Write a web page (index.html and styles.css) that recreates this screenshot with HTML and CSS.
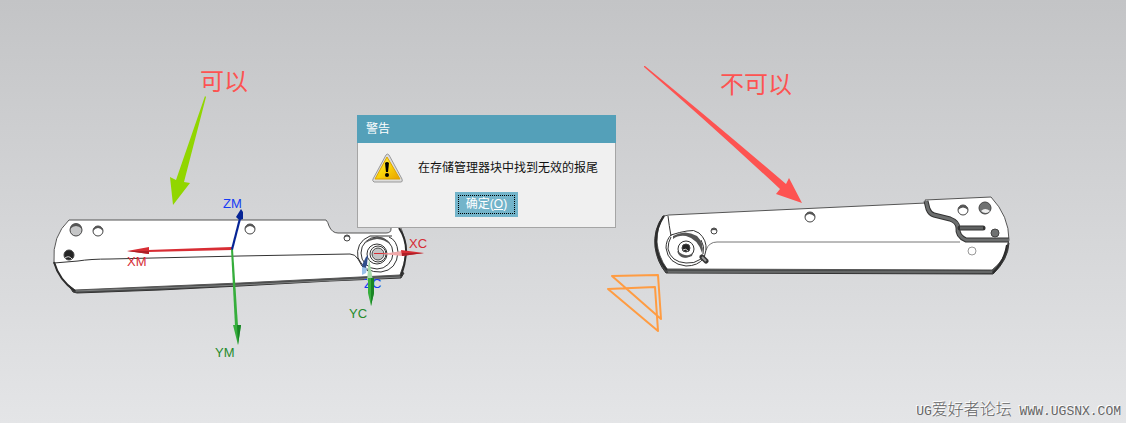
FILE: index.html
```html
<!DOCTYPE html>
<html lang="zh-CN">
<head>
    <meta charset="UTF-8">
    <meta name="viewport" content="width=device-width, initial-scale=1.0">
    <title>警告</title>
    <link rel="stylesheet" href="styles.css">
</head>
<body>
    <main class="viewport">
        <svg class="scene" viewBox="0 0 1126 423" aria-hidden="true">
            <!-- left part -->
            <g class="part">
                <path class="edge" d="M54 263L73 292L77 293L160 290L240 286L330 281L401 278L404 273L400 272L75 288L66 281Z"/>
                <path class="face" d="M69 220H326Q328 222 329 226Q332 233 338 233H386Q391 233 391 229V222H398Q406 237 406 252Q405 263 400 275L240 283L75 290Q59 281 54 262Q52 236 69 220Z"/>
                <path class="rim" d="M399 228Q407 240 406 254Q405 265 401 276M54 262Q59 280 75 291"/>
                <path class="rim-light" d="M76 291L240 285L400 277"/>
                <path class="line" d="M54 263L78 261Q90 259 110 259L240 256L350 254Q355 254 358 259Q361 267 368 271"/>
                <circle class="hole open" cx="76" cy="230" r="6"/>
                <path class="shade" d="M70 229A6 6 0 0 1 82 229Q76 223 70 229Z"/>
                <circle class="hole pale" cx="98" cy="231" r="5"/>
                <path class="shade" d="M93 231A5 5 0 0 1 103 231Q98 225 93 231Z"/>
                <circle class="hole dark" cx="69" cy="255" r="5"/>
                <path class="glint" d="M65 258Q69 255 72 259"/>
                <circle class="hole pale" cx="250" cy="229" r="5"/>
                <path class="shade" d="M245 229A5 5 0 0 1 255 229Q250 223 245 229Z"/>
                <circle class="hole pale" cx="347" cy="238" r="3"/>
                <path class="shade" d="M344 238A3 3 0 0 1 350 238Q347 235 344 238Z"/>
                <path class="ring" d="M358 259Q355 242 370 236H392M358 258Q365 273 381 272Q397 270 398 252Q397 240 389 237"/>
                <ellipse class="ring" cx="377" cy="253" rx="16" ry="16"/>
                <path class="shade" d="M364 244Q370 237 379 237Q387 238 391 245Q384 239 377 239Q369 240 364 244Z"/>
                <circle class="ring" cx="377" cy="254" r="10"/>
                <circle class="ring" cx="378" cy="254" r="8"/>
                <circle class="bore" cx="378" cy="254" r="6"/>
            </g>

            <!-- right part -->
            <g class="part">
                <path class="edge" d="M663 216Q653 230 655 247Q657 262 666 273L993 274Q1008 260 1009 243L1003 239L990 270L670 268Q659 246 665 216Z"/>
                <path class="face" d="M664 216L669 215L926 203L925 200L991 197Q1009 216 1009 240L1007 246Q1005 260 992 270L667 269Q658 256 657 242Q657 225 664 216Z"/>
                <path class="rim" d="M664 216Q655 229 656 245Q658 261 667 270M1007 245Q1005 260 993 273"/>
                <path class="rim-light" d="M668 272H992"/>
                <path class="groove" d="M926 201L928 209Q930 214 934 215L950 219Q958 222 958 228Q957 236 966 240H1009"/>
                <path class="groove-fill" d="M926 201L928 209Q930 214 934 215L950 219Q958 222 958 228Q957 236 966 240H1009"/>
                <path class="slot" d="M960 228H983"/>
                <path class="slot-fill" d="M960 228H983"/>
                <path class="line soft" d="M706 250Q709 242 717 242H960"/>
                <path class="line" d="M668 216Q669 225 671 236"/>
                <circle class="hole pale" cx="810" cy="217" r="5"/>
                <path class="shade" d="M805 217A5 5 0 0 1 815 217Q809 211 805 217Z"/>
                <circle class="hole pale" cx="714" cy="231" r="3"/>
                <path class="shade" d="M711 231A3 3 0 0 1 717 231Q714 229 711 231Z"/>
                <circle class="hole pale" cx="963" cy="210" r="5"/>
                <path class="shade" d="M958 210A5 5 0 0 1 968 210Q963 205 958 210Z"/>
                <circle class="hole grey" cx="985" cy="208" r="6"/>
                <path class="glint fill" d="M981 211Q985 207 990 211Q986 215 981 211Z"/>
                <circle class="hole grey" cx="995" cy="233" r="4"/>
                <circle class="hole faint" cx="972" cy="251" r="4"/>
                <path class="ring" d="M671 235Q680 232 687 231Q694 229 699 233Q707 240 706 250L704 258M704 258Q698 266 686 266Q668 264 666 248Q666 240 671 235"/>
                <path class="ring" d="M671 237Q668 242 668 249Q671 262 686 263Q694 264 701 259M703 254Q705 246 701 240"/>
                <path class="shade" d="M673 236Q685 229 697 236Q705 244 702 253Q698 239 686 236Q678 235 673 239Z"/>
                <circle class="ring" cx="686" cy="249" r="8"/>
                <path class="shade" d="M677 251Q680 261 692 256L693 252Q688 259 677 251Z"/>
                <circle class="hole dark" cx="686" cy="248" r="4"/>
                <path class="glint" d="M683 250Q686 248 688 251"/>
                <path class="nub" d="M702 257L706 261"/>
                <path class="nub-fill" d="M702 257L706 261"/>
            </g>

            <!-- machine coordinate system -->
            <g class="axis axis-x">
                <path d="M232 247L148 250V252L232 250Z"/>
                <path d="M127 251L149 247V254Z"/>
                <path class="tip-shade" d="M127 251L149 251V254Z"/>
            </g>
            <g class="axis axis-y">
                <path d="M231 249H233L238 326H235Z"/>
                <path d="M233 325H241L238 345Z"/>
                <path class="tip-shade" d="M237 325H241L238 345Z"/>
            </g>
            <g class="axis axis-z">
                <path d="M231 249L239 218L241 219L233 250Z"/>
                <path d="M236 217L241 209L243 212V219Q239 221 236 217Z"/>
            </g>

            <!-- work coordinate system -->
            <g class="axis axis-x">
                <path d="M374 253H395V254H374Z"/>
                <path class="cone-light" d="M382 254L402 251V256Z"/>
                <path d="M401 250L424 253L402 256Z"/>
                <path class="tip-shade" d="M402 253H424L402 256Z"/>
            </g>
            <path class="wcs-z" d="M368 255L367 265L364 270L362 265L366 257Z"/>
            <path class="wcs-z-end" d="M362 267L367 268L366 273L362 275Z"/>

            <g class="labels">
                <text class="red" x="127" y="266">XM</text>
                <text class="green" x="215" y="357">YM</text>
                <text class="blue" x="223" y="208">ZM</text>
                <text class="red" x="409" y="248">XC</text>
                <text class="green" x="349" y="318">YC</text>
                <text class="blue" x="364" y="288">ZC</text>
            </g>
            <g class="axis axis-y">
                <path class="cone-light" d="M369 258L373 281H367Z"/>
                <path d="M368 278H374V293L371 306L368 293Z"/>
                <path class="tip-shade" d="M371 278H374V293L371 306Z"/>
            </g>

            <path class="triangle" d="M612 276L658 275L661 319ZM608 289L655 287L658 331Z"/>

            <!-- hand-made notes -->
            <path class="arrow-ok" d="M205 96L206 97L184 182L190 183L173 205L170 177L176 180Z"/>
            <path class="arrow-bad" d="M644 66L645 66Q710 119 786 184L789 178L802 203L776 194L780 189Q710 124 644 67Z"/>
            <text class="note" x="200" y="90">可以</text>
            <text class="note" x="720" y="93">不可以</text>
        </svg>

        <section class="dialog" role="alertdialog" aria-labelledby="dialog-title" aria-describedby="dialog-message">
            <h1 class="dialog-title" id="dialog-title">警告</h1>
            <div class="dialog-body">
                <div class="message">
                    <svg class="warning-icon" viewBox="0 0 32 30" aria-hidden="true">
                        <defs>
                            <linearGradient id="warn" x1="0" y1="0" x2="1" y2="1">
                                <stop offset="0" stop-color="#fff35a"/>
                                <stop offset="0.5" stop-color="#fbd40a"/>
                                <stop offset="1" stop-color="#e7a000"/>
                            </linearGradient>
                        </defs>
                        <path class="icon-frame" d="M14 2Q15 0 17 2L30 26Q31 29 29 29H2Q0 28 1 26Z"/>
                        <path class="icon-face" d="M15 4L28 26H3Z"/>
                        <path d="M13 10Q15 8 17 10L16 19H14Z"/>
                        <circle cx="15" cy="22" r="2"/>
                    </svg>
                    <p id="dialog-message">在存储管理器块中找到无效的报尾</p>
                </div>
                <button class="confirm" type="button" accesskey="o"><span>确定(<u>O</u>)</span></button>
            </div>
        </section>

        <p class="watermark"><span class="latin">UG</span>爱好者论坛<span class="latin"> WWW.UGSNX.COM</span></p>
    </main>
</body>
</html>
```
FILE: styles.css
```css
* {
    box-sizing: border-box;
}
body {
    margin: 0;
    font-family: "Liberation Sans", "Noto Sans CJK SC", sans-serif;
    font-size: 12px;
}
.viewport {
    position: relative;
    min-height: 100vh;
    overflow: hidden;
    background: linear-gradient(#c3c4c6, #e4e5e7);
}
.scene {
    display: block;
    width: 100%;
}

/* parts */
.part {
    fill: none;
    stroke: #333;
    stroke-width: 1;
}
.part .edge {
    fill: #4a4c4c;
    stroke: #333;
}
.part .face {
    fill: #fff;
    stroke: #555;
}
.part .rim {
    stroke: #2c2c2c;
    stroke-width: 2;
}
.part .rim-light {
    stroke: #808282;
}
.part .soft {
    stroke: #777;
}
.part .pale {
    fill: #fff;
}
.part .hole {
    stroke: #444;
}
.part .open {
    fill: #c5c6c7;
}
.part .dark {
    fill: #252525;
}
.part .grey {
    fill: #707272;
}
.part .hole.faint {
    fill: #fff;
    stroke: #999;
}
.part .shade {
    fill: #555;
    stroke: none;
}
.part .glint {
    stroke: #ddd;
}
.part .glint.fill {
    fill: #eee;
    stroke: none;
}
.part .bore {
    fill: #c3c4c5;
    stroke: #444;
}
.part .groove {
    stroke: #333;
    stroke-width: 5;
}
.part .groove-fill {
    stroke: #6c6e6e;
    stroke-width: 3;
}
.part .slot {
    stroke: #333;
    stroke-width: 5;
    stroke-linecap: round;
}
.part .slot-fill {
    stroke: #606262;
    stroke-width: 3;
}
.part .nub {
    stroke: #333;
    stroke-width: 5;
    stroke-linecap: round;
}
.part .nub-fill {
    stroke: #999;
    stroke-width: 2;
}

/* axes */
.axis-x {
    fill: #d82d34;
}
.axis-y {
    fill: #36ae3c;
}
.axis-z {
    fill: #062495;
}
.axis-x .tip-shade {
    fill: #ae2028;
}
.axis-y .tip-shade {
    fill: #198425;
}
.axis-x .cone-light {
    fill: #f0a9aa;
}
.axis-y .cone-light {
    fill: #a5dba8;
}
.wcs-z {
    fill: #2f4d8b;
}
.wcs-z-end {
    fill: #9bc3eb;
}
.labels {
    font-size: 13px;
}
.red {
    fill: #d52c35;
}
.green {
    fill: #278b2d;
}
.blue {
    fill: #153bf5;
}
.triangle {
    fill: none;
    stroke: #ff9c42;
    stroke-width: 2;
    stroke-linejoin: round;
}
.arrow-ok {
    fill: #91d600;
}
.arrow-bad,
.note {
    fill: #fd5351;
}
.note {
    font-family: "Noto Sans CJK SC", sans-serif;
    font-size: 24px;
}

/* dialog */
.dialog {
    position: absolute;
    top: 115px;
    left: 357px;
    width: 259px;
    background: #f0f0f0;
    border: 1px solid #a5a5a5;
    border-top: 0;
}
.dialog-title {
    margin: 0 -1px;
    padding: 0 9px;
    background: #54a0b9;
    color: #fff;
    font-size: 12px;
    font-weight: normal;
    line-height: 28px;
}
.dialog-body {
    display: flex;
    flex-direction: column;
    align-items: center;
    gap: 9px;
    padding: 10px 14px;
}
.message {
    display: flex;
    align-items: center;
    align-self: stretch;
    gap: 14px;
    color: #111;
}
.message p {
    margin: 0;
    line-height: 20px;
    white-space: nowrap;
}
.warning-icon {
    width: 32px;
    height: 30px;
}
.icon-frame {
    fill: #ddd;
    stroke: #999;
}
.icon-face {
    fill: url(#warn);
    stroke: #dda300;
}
.confirm {
    width: 63px;
    height: 25px;
    padding: 3px;
    border: 0;
    background: #73b4ca;
    color: #fff;
    font: inherit;
}
.confirm span {
    display: block;
    border: 1px dotted #000;
    line-height: 17px;
}

.watermark {
    position: absolute;
    right: 5px;
    bottom: 1px;
    margin: 0;
    color: #666;
    font-family: "Noto Sans CJK SC", sans-serif;
    font-size: 16px;
    font-weight: 300;
    line-height: 20px;
    text-shadow: -1px -1px #fff;
    white-space: pre;
}
.latin {
    font-family: "Liberation Mono", monospace;
    font-size: 13px;
}
```
